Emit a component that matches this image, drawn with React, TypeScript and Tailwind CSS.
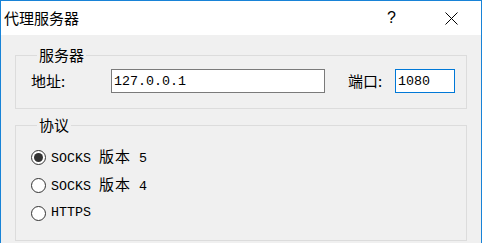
import { useState } from "react";

const cjk = "font-['Noto_Sans_CJK_SC',sans-serif]";
const mono = "font-['Liberation_Mono','Noto_Sans_CJK_SC',monospace]";

type RadioProps = {
  checked: boolean
  label: React.ReactNode
  onSelect: () => void
}

const Radio = ({ checked, label, onSelect }: RadioProps) => {
  return (
    <div className="flex h-[28px] items-center gap-[5px]" onClick={onSelect}>
      <span className="flex h-[15px] w-[15px] items-center justify-center rounded-full border border-[#333] bg-white">
        {checked && <span className="h-[9px] w-[9px] rounded-full bg-[#333]" />}
      </span>
      <span className={`${mono} text-[13.33px] leading-none text-black`}>{label}</span>
    </div>
  );
};

const Han = ({ children }: { children: string }) => (
  <span className={`${cjk} text-[15px] tracking-[1px]`}>{children}</span>
);

const App = () => {
  const [proto, setProto] = useState("socks5");

  return (
    <div className="h-[243px] w-[482px] overflow-hidden border-x border-t border-[#1883d7] bg-[#f0f0f0]">
      {/* title bar */}
      <div className="flex h-[34px] items-center bg-white">
        <span className={`${cjk} pl-[3px] text-[15px] text-black`}>代理服务器</span>
        <div className="ml-auto flex items-center">
          <span className="font-['Liberation_Sans',sans-serif] text-[16px] text-black">?</span>
          <svg className="ml-[49px] mr-[23px]" width="13" height="13" viewBox="0 0 13 13">
            <path d="M0.5 0.5 L12.5 12.5 M12.5 0.5 L0.5 12.5" stroke="#000" strokeWidth="1" fill="none" />
          </svg>
        </div>
      </div>

      <div className="px-[14px]">
        <fieldset className="mt-[10px] border border-[#dcdcdc] pb-[15px] pl-[15px] pt-[4px]">
          <legend className={`${cjk} ml-[6px] px-[2px] text-[15px] leading-[20px] text-black`}>服务器</legend>
          <div className="flex items-center">
            <span className={`${cjk} w-[80px] text-[15px] text-black`}>地址:</span>
            <input
              readOnly
              defaultValue="127.0.0.1"
              className={`${mono} h-[24px] w-[214px] border border-[#7a7a7a] bg-white px-[2px] text-[13.33px] text-black outline-none`}
            />
            <span className={`${cjk} ml-[23px] w-[47px] text-[15px] text-black`}>端口:</span>
            <input
              readOnly
              defaultValue="1080"
              className={`${mono} h-[24px] w-[60px] border border-[#0078d7] bg-white px-[2px] text-[13.33px] text-black outline-none`}
            />
          </div>
        </fieldset>

        <fieldset className="mt-[6px] border border-[#dcdcdc] pb-[13px] pl-[15px] pt-[8px]">
          <legend className={`${cjk} ml-[6px] px-[2px] text-[15px] leading-[20px] text-black`}>协议</legend>
          <Radio
            checked={proto === "socks5"}
            onSelect={() => setProto("socks5")}
            label={<>SOCKS <Han>版本</Han> 5</>}
          />
          <Radio
            checked={proto === "socks4"}
            onSelect={() => setProto("socks4")}
            label={<>SOCKS <Han>版本</Han> 4</>}
          />
          <Radio checked={proto === "https"} onSelect={() => setProto("https")} label="HTTPS" />
        </fieldset>
      </div>
    </div>
  );
};

export default App
